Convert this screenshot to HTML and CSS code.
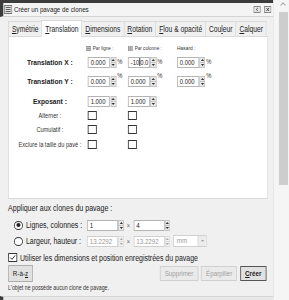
FILE: index.html
```html
<!DOCTYPE html>
<html lang="fr">
<head>
<meta charset="utf-8">
<title>Créer un pavage de clones</title>
<link rel="stylesheet" href="styles.css">
</head>
<body>
<div class="frame">
<div class="window">
  <div class="titlebar">
    <svg class="ticon" width="10" height="9" viewBox="0 0 10 9"><rect x="0.5" y="0.5" width="9" height="8" fill="#ddd" stroke="#777"/><path d="M2 2.5h6M2 4.5h6M2 6.5h6" stroke="#555"/></svg>
    <span class="title">Créer un pavage de clones</span>
    <span class="tbtns">
      <span class="tbtn"><svg width="9" height="7" viewBox="0 0 9 7"><rect x="0.5" y="0.5" width="8" height="6" fill="#e4e4e4" stroke="#888"/><path d="M5.5 2L3.5 3.5L5.5 5" fill="none" stroke="#444"/></svg></span>
      <span class="tbtn"><svg width="9" height="7" viewBox="0 0 9 7"><rect x="0.5" y="0.5" width="8" height="6" fill="#e4e4e4" stroke="#888"/><path d="M3 2L6 5M6 2L3 5" stroke="#444"/></svg></span>
    </span>
  </div>
  <div class="content">
    <div class="tabs">
      <span class="tab"><u>S</u>ymétrie</span>
      <span class="tab active"><u>T</u>ranslation</span>
      <span class="tab"><u>D</u>imensions</span>
      <span class="tab"><u>R</u>otation</span>
      <span class="tab"><u>F</u>lou &amp; opacité</span>
      <span class="tab">Cou<u>l</u>eur</span>
      <span class="tab"><u>C</u>alquer</span>
    </div>
    <div class="panel">
      <div class="grid">
        <span></span>
        <span class="hdr h1"><svg class="gicon" width="6" height="5" viewBox="0 0 6 5"><path d="M0 0h6v5H0z" fill="#999"/><path d="M0 1.5h6M0 3.5h6" stroke="#ddd" stroke-width="0.6"/></svg>Par ligne :</span>
        <span class="hdr h2"><svg class="gicon" width="6" height="5" viewBox="0 0 6 5"><path d="M0 0h6v5H0z" fill="#999"/><path d="M2 0v5M4 0v5" stroke="#ddd" stroke-width="0.6"/></svg>Par colonne :</span>
        <span class="hdr h3">Hasard :</span>

        <span class="lbl b">Translation X :</span>
        <span class="cell"><span class="sb"><span class="in">0.000</span><span class="spin"><i></i><i></i></span></span><span class="unit">%</span></span>
        <span class="cell"><span class="sb"><span class="in">-10<span class="caret"></span>0.0</span><span class="spin"><i></i><i></i></span></span><span class="unit">%</span></span>
        <span class="cell"><span class="sb"><span class="in">0.000</span><span class="spin"><i></i><i></i></span></span><span class="unit">%</span></span>

        <span class="lbl b">Translation Y :</span>
        <span class="cell"><span class="sb"><span class="in">0.000</span><span class="spin"><i></i><i></i></span></span><span class="unit">%</span></span>
        <span class="cell"><span class="sb"><span class="in">0.000</span><span class="spin"><i></i><i></i></span></span><span class="unit">%</span></span>
        <span class="cell"><span class="sb"><span class="in">0.000</span><span class="spin"><i></i><i></i></span></span><span class="unit">%</span></span>

        <span class="lbl b">Exposant :</span>
        <span class="cell"><span class="sb"><span class="in">1.000</span><span class="spin"><i></i><i></i></span></span></span>
        <span class="cell"><span class="sb"><span class="in">1.000</span><span class="spin"><i></i><i></i></span></span></span>
        <span></span>

        <span class="lbl s">Alterner :</span>
        <span class="cell"><span class="cb"></span></span>
        <span class="cell"><span class="cb"></span></span>
        <span></span>

        <span class="lbl s">Cumulatif :</span>
        <span class="cell"><span class="cb"></span></span>
        <span class="cell"><span class="cb"></span></span>
        <span></span>

        <span class="lbl s">Exclure la taille du pavé :</span>
        <span class="cell"><span class="cb"></span></span>
        <span class="cell"><span class="cb"></span></span>
        <span></span>
      </div>
    </div>

    <div class="apply">
      <div class="apply-title">Appliquer aux clones du pavage :</div>
      <div class="arow">
        <span class="radio on"></span><span class="alabel">Lignes, colonnes :</span>
        <span class="sb wide"><span class="in">1</span><span class="spin"><i></i><i></i></span></span>
        <span class="times">×</span>
        <span class="sb wide"><span class="in">4</span><span class="spin"><i></i><i></i></span></span>
      </div>
      <div class="arow">
        <span class="radio"></span><span class="alabel">Largeur, hauteur :</span>
        <span class="sb wide dis"><span class="in">13.2292</span><span class="spin"><i></i><i></i></span></span>
        <span class="times">×</span>
        <span class="sb wide dis"><span class="in">13.2292</span><span class="spin"><i></i><i></i></span></span>
        <span class="combo"><span class="ctext">mm</span><span class="carrow"></span></span>
      </div>
      <div class="crow">
        <span class="cb on"><svg width="9" height="7" viewBox="0 0 9 7"><path d="M1.5 3.6L3.6 5.4L7.5 1.4" fill="none" stroke="#222" stroke-width="1"/></svg></span>
        <span class="ctext2">Utiliser les dimensions et position enregistrées du pavage</span>
      </div>
      <div class="brow">
        <span class="btn tall">R-à-<u>z</u></span>
        <span class="spacer"></span>
        <span class="btn dis">Supprimer</span>
        <span class="btn dis">Éparpiller</span>
        <span class="btn def"><u>C</u>réer</span>
      </div>
      <div class="status">L'objet ne possède aucun clone de pavage.</div>
    </div>
  </div>
  <div class="bottom"></div>
</div>
</div>
<div class="scrollcol">
  <span class="sarrow"></span>
  <span class="thumb"></span>
</div>
</body>
</html>
```

FILE: styles.css
```css
* { box-sizing: border-box; }
html, body { margin: 0; padding: 0; }
body {
  width: 289px;
  height: 300px;
  overflow: hidden;
  display: flex;
  background: #f0f0f0;
  font-family: "Liberation Sans", Arial, sans-serif;
  color: #1b1b1b;
}
u { text-decoration: underline; text-underline-offset: 1px; text-decoration-thickness: 1px; }

/* The reference is horizontally compressed: the dialog is laid out
   1.22x wider and squeezed back to 273px. */
.frame { width: 273px; height: 300px; flex: none; }
.window {
  width: 333px;
  height: 300px;
  transform: scaleX(0.82);
  transform-origin: 0 0;
  display: flex;
  flex-direction: column;
  border-top: 3px solid #3c3c3c;
  background: #f0f0f0;
}
.titlebar {
  height: 14px;
  flex: none;
  display: flex;
  align-items: center;
  background: #f4f4f4;
  border-left: 4px solid #3c3c3c;
  border-bottom: 1px solid #d4d4d4;
}
.ticon { margin-left: 1px; }
.title { font-size: 7.6px; margin-left: 2px; color: #222; white-space: nowrap; }
.tbtns { margin-left: auto; margin-right: 2px; display: flex; gap: 4px; }
.tbtn { display: flex; }

.content {
  flex: 1;
  display: flex;
  flex-direction: column;
  padding: 3px 6px 0 9.8px;
}
.tabs {
  display: flex;
  align-items: flex-end;
  height: 16px;
}
.tab {
  font-size: 8.2px;
  height: 15px;
  padding: 0 3.7px;
  display: flex;
  align-items: center;
  white-space: nowrap;
  border: 1px solid #d9d9d9;
  border-bottom: none;
  border-right: none;
  background: #f0f0f0;
  color: #222;
}
.tab:last-child { border-right: 1px solid #d9d9d9; }
.tab.active {
  background: #fff;
  height: 17px;
  margin-bottom: -1px;
  position: relative;
  z-index: 1;
  border-right: 1px solid #d9d9d9;
}
.tab.active + .tab { border-left: none; }

.panel {
  background: #fff;
  border: 1px solid #d9d9d9;
  height: 163px;
  padding: 4px 0 0 9.8px;
}
.grid {
  display: grid;
  grid-template-columns: 80.5px 48.8px 59.8px 70px;
  grid-template-rows: 14px 14px 24px 16px 12px 16px 14px;
}
.grid > * { display: flex; align-items: center; }
.hdr { font-size: 5.6px; color: #333; gap: 2.4px; white-space: nowrap; }
.h1 { padding-left: 3.7px; }
.h2 { padding-left: 6px; }
.h3 { padding-left: 6.1px; font-size: 6px; }
.gicon { flex: none; }
.lbl { justify-content: center; text-align: center; white-space: nowrap; }
.lbl.b { font-weight: bold; font-size: 8.1px; color: #1a1a1a; }
.lbl.s { font-size: 6.9px; color: #333; }
.cell { padding-left: 6.1px; align-items: center; }

.sb {
  display: flex;
  height: 11px;
  align-items: stretch;
  flex: none;
}
.in {
  width: 26.8px;
  border: 1px solid #b4b4b4;
  background: #fff;
  font-size: 7.2px;
  padding-left: 2.4px;
  color: #222;
  overflow: hidden;
  white-space: nowrap;
  display: flex;
  align-items: center;
}
.caret { display: inline-block; width: 1.2px; height: 8px; background: #111; }
.spin {
  width: 7.3px;
  display: flex;
  flex-direction: column;
  margin-left: 0.6px;
}
.spin i {
  flex: 1;
  display: flex;
  align-items: center;
  justify-content: center;
  background: #eaeaea;
  border: 1px solid #c4c4c4;
}
.spin i + i { border-top: none; }
.spin i::before {
  content: "";
  border-left: 2px solid transparent;
  border-right: 2px solid transparent;
  border-bottom: 2px solid #333;
}
.spin i + i::before {
  border-bottom: none;
  border-top: 2px solid #333;
}
.unit { font-size: 7px; margin-left: 1.2px; align-self: flex-start; margin-top: 3px; color: #333; }

.cb {
  width: 11px;
  height: 9px;
  border: 1px solid #333;
  background: #fff;
  display: flex;
  align-items: center;
  justify-content: center;
  flex: none;
}

.apply { padding-top: 3px; }
.apply-title { font-size: 8.6px; height: 12px; line-height: 12px; color: #1a1a1a; white-space: nowrap; }
.arow {
  display: flex;
  align-items: center;
  height: 16px;
}
.apply-title + .arow { margin-top: 3px; }
.radio {
  width: 11px;
  height: 9px;
  border: 1px solid #333;
  border-radius: 50%;
  margin-left: 7.3px;
  background: #fff;
  display: flex;
  align-items: center;
  justify-content: center;
  flex: none;
}
.radio.on::before {
  content: "";
  width: 5px;
  height: 4px;
  border-radius: 50%;
  background: #222;
}
.alabel { width: 78px; flex: none; padding-left: 3.6px; font-size: 8.5px; color: #1a1a1a; white-space: nowrap; }
.sb.wide .in { width: 37.8px; font-size: 7.6px; }
.sb.wide .spin { width: 6.1px; }
.sb.dis .in { color: #9a9a9a; border-color: #cfcfcf; }
.sb.dis .spin i { background: #f2f2f2; border-color: #dcdcdc; }
.sb.dis .spin i::before { border-bottom-color: #aaa; }
.sb.dis .spin i + i::before { border-top-color: #aaa; }
.times { font-size: 7px; color: #666; width: 12.2px; text-align: center; flex: none; }
.combo {
  display: flex;
  width: 41.5px;
  height: 12px;
  margin-left: 3.7px;
  border: 1px solid #d0d0d0;
  background: #fff;
  flex: none;
}
.ctext { flex: 1; font-size: 7.6px; color: #9a9a9a; padding-left: 3.6px; line-height: 10px; }
.carrow {
  width: 10px;
  background: #ececec;
  border-left: 1px solid #d8d8d8;
  display: flex;
  align-items: center;
  justify-content: center;
}
.carrow::before {
  content: "";
  border-left: 2.4px solid transparent;
  border-right: 2.4px solid transparent;
  border-top: 2px solid #aaa;
}
.crow {
  display: flex;
  align-items: center;
  height: 15px;
  margin-top: 1px;
}
.ctext2 { font-size: 8.5px; margin-left: 3.7px; color: #1a1a1a; white-space: nowrap; }
.brow {
  display: flex;
  align-items: center;
  height: 17px;
  gap: 3.7px;
  margin-right: 2.4px;
}
.spacer { flex: 1; }
.btn {
  font-size: 7.6px;
  height: 15px;
  padding: 0 4.9px;
  display: flex;
  align-items: center;
  white-space: nowrap;
  border: 1px solid #adadad;
  background: #e1e1e1;
  color: #1a1a1a;
}
.btn.tall { height: 17px; }
.btn.dis { color: #a0a0a0; border-color: #d0d0d0; background: #eaeaea; }
.btn.def { border-color: #555; font-weight: bold; }
.status { font-size: 6.4px; height: 10px; line-height: 10px; color: #333; margin-top: 1px; white-space: nowrap; }
.bottom {
  height: 4px;
  flex: none;
  border-top: 1px solid #d6d6d6;
  border-left: 4px solid #3c3c3c;
  background: #e9e9e9;
}

.scrollcol {
  width: 16px;
  height: 300px;
  flex: none;
  display: flex;
  flex-direction: column;
  align-items: center;
  background: #f5f5f5;
  border-left: 1px solid #e6e6e6;
  padding-left: 3px;
}
.sarrow {
  margin-top: 3px;
  width: 4px;
  height: 4px;
  border-left: 1px solid #aaa;
  border-top: 1px solid #aaa;
  transform: rotate(45deg);
}
.thumb {
  margin-top: 5px;
  width: 9px;
  height: 173px;
  background: #cdcdcd;
}
```
